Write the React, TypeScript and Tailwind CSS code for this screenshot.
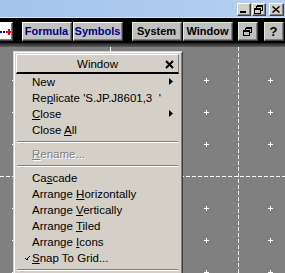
import React from 'react'

const ui = { fontFamily: '"Liberation Sans", Arial, sans-serif' }

function ToolButton({
  children,
  w,
  green,
  navy,
  className = '',
}: {
  children: React.ReactNode
  w: string
  green?: boolean
  navy?: boolean
  className?: string
}) {
  return (
    <div
      className={`h-[19px] ${w} ${className} flex border-l border-t ${
        green ? 'border-[#d8f0d8]' : 'border-white'
      } border-r border-b border-r-[#404040] border-b-[#404040]`}
    >
      <div
        className={`flex-1 flex items-center justify-center bg-[#c0c0c0] border-r border-b border-[#808080] text-[11px] font-bold leading-none pt-[1px] ${
          navy ? 'text-[#000080]' : 'text-black'
        }`}
      >
        {children}
      </div>
    </div>
  )
}

function CtrlButton({ children, className = '' }: { children: React.ReactNode; className?: string }) {
  return (
    <div className={`w-[14px] h-[13px] flex border-l border-t border-white border-r border-b border-r-[#404040] border-b-[#404040] ${className}`}>
      <div className="flex-1 flex items-center justify-center bg-[#d4d0c8] border-r border-b border-[#808080]">
        {children}
      </div>
    </div>
  )
}

function RestoreIcon() {
  return (
    <svg width="9" height="9" viewBox="0 0 9 9" shapeRendering="crispEdges">
      <path d="M2.5 0.5h6v5h-2M2.5 0.5v2M2 1.5h7" stroke="#000" fill="none" />
      <path d="M0.5 3.5h6v5h-6z M0 4.5h7" stroke="#000" fill="none" />
    </svg>
  )
}

function Arrow() {
  return (
    <svg width="4" height="7" viewBox="0 0 4 7" className="absolute right-[6px] top-[4px]">
      <path d="M0 0L4 3.5L0 7z" fill="#000" />
    </svg>
  )
}

function Item({
  children,
  arrow,
  check,
  disabled,
}: {
  children: React.ReactNode
  arrow?: boolean
  check?: boolean
  disabled?: boolean
}) {
  return (
    <div
      className={`relative h-[16px] pl-[16px] pt-[2px] flex items-center text-[11.5px] leading-none ${
        disabled ? 'text-[#808080] [text-shadow:1px_1px_0_#ffffff]' : 'text-black'
      }`}
    >
      {check && (
        <svg width="5" height="5" viewBox="0 0 5 5" className="absolute left-[9px] top-[6px]" shapeRendering="crispEdges">
          <rect x="0" y="2" width="1" height="1" fill="#000" />
          <rect x="1" y="3" width="1" height="1" fill="#000" />
          <rect x="2" y="2" width="1" height="2" fill="#000" />
          <rect x="3" y="1" width="1" height="1" fill="#000" />
          <rect x="4" y="0" width="1" height="1" fill="#000" />
        </svg>
      )}
      <span>{children}</span>
      {arrow && <Arrow />}
    </div>
  )
}

function Sep() {
  return (
    <div className="h-[8px] flex items-center pl-[1px] pr-[1px]">
      <div className="w-full border-t border-[#808080] border-b border-b-white" />
    </div>
  )
}

function Grid() {
  const xs = [14, 46, 78, 142, 174, 206, 270]
  const ys = [33, 65, 97, 161, 193, 225]
  let d = ''
  for (const x of xs) for (const y of ys) d += `M${x - 2} ${y + 0.5}h5M${x + 0.5} ${y - 2}v5`
  return (
    <svg width="285" height="226" viewBox="0 0 285 226" shapeRendering="crispEdges" className="block">
      <rect width="285" height="226" fill="#808080" />
      <path d={d} stroke="#fff" strokeWidth="1" />
      <path d="M238.5 0V226M110.5 0V226" stroke="#fff" strokeDasharray="4 2" />
      <path d="M0 129.5H285" stroke="#fff" strokeDasharray="4 2" />
    </svg>
  )
}

export default function App() {
  return (
    <div className="relative w-[285px] h-[273px] overflow-hidden bg-[#808080]" style={ui}>
      {/* barra titolo */}
      <div className="h-[17px] bg-gradient-to-r from-[#a4c4ec] to-[#b4d0f0] flex justify-end items-start pt-[3px] pr-[1px]">
        <CtrlButton>
          <div className="w-[6px] h-[2px] bg-black mt-[5px] -ml-[1px]" />
        </CtrlButton>
        <CtrlButton className="ml-[1px]">
          <RestoreIcon />
        </CtrlButton>
        <CtrlButton className="ml-[3px] w-[15px]">
          <svg width="8" height="7" viewBox="0 0 8 7">
            <path d="M0.5 0.5L7.5 6.5M7.5 0.5L0.5 6.5" stroke="#000" strokeWidth="1.5" />
          </svg>
        </CtrlButton>
      </div>
      <div className="h-[1px] bg-[#dce6f2]" />

      {/* toolbar */}
      <div className="h-[25px] bg-black flex items-start pt-[4px]">
        <div className="h-[19px] w-[13px] flex border-t border-white border-r border-b border-r-[#404040] border-b-[#404040]">
          <div className="flex-1 bg-white border-r border-b border-[#808080] flex items-center">
            <svg width="11" height="7" viewBox="0 0 11 7" shapeRendering="crispEdges">
              <rect x="0" y="3" width="2" height="2" fill="#0000ff" />
              <rect x="3" y="3" width="2" height="2" fill="#0000ff" />
              <rect x="6" y="3" width="5" height="2" fill="#ff0000" />
              <rect x="7.5" y="1" width="2" height="6" fill="#ff0000" />
            </svg>
          </div>
        </div>
        <ToolButton w="w-[50px]" navy className="ml-[9px]">Formula</ToolButton>
        <ToolButton w="w-[50px]" navy className="ml-[1px]">Symbols</ToolButton>
        <ToolButton w="w-[50px]" green className="ml-[9px]">System</ToolButton>
        <ToolButton w="w-[50px]" green className="ml-[1px]">Window</ToolButton>
        <ToolButton w="w-[20px]" green className="ml-[5px]">
          <RestoreIcon />
        </ToolButton>
        <ToolButton w="w-[20px]" green className="ml-[6px]">
          <span className="text-[13px]">?</span>
        </ToolButton>
      </div>
      <div className="h-[4px] bg-gradient-to-b from-[#202020] to-[#606060]" />

      <Grid />

      {/* menu Window */}
      <div className="absolute left-[13px] top-[51px] w-[170px] h-[240px] border-l border-t border-[#d4d0c8] border-r border-b border-r-[#404040] border-b-[#404040]">
        <div className="h-full bg-[#d4d0c8] border-l border-t border-white border-r border-b border-r-[#808080] border-b-[#808080] pl-[1px] pt-[1px] pr-[2px]">
          <div className="relative h-[20px] pt-[2px] border-l border-t border-white border-r border-r-[#808080] border-b-2 border-b-black flex items-center justify-center text-[11.5px] leading-none">
            Window
            <svg width="9" height="9" viewBox="0 0 9 9" className="absolute right-[4px] top-[5px]">
              <path d="M1 1L8 8M8 1L1 8" stroke="#000" strokeWidth="2" />
            </svg>
          </div>
          <Item arrow>New</Item>
          <Item>
            Re<u>p</u>licate 'S.JP.J8601,3&nbsp;&nbsp;'
          </Item>
          <Item arrow>
            <u>C</u>lose
          </Item>
          <Item>
            Close <u>A</u>ll
          </Item>
          <Sep />
          <Item disabled>
            <u>R</u>ename...
          </Item>
          <Sep />
          <Item>
            Ca<u>s</u>cade
          </Item>
          <Item>
            Arrange <u>H</u>orizontally
          </Item>
          <Item>
            Arrange <u>V</u>ertically
          </Item>
          <Item>
            Arrange <u>T</u>iled
          </Item>
          <Item>
            Arrange <u>I</u>cons
          </Item>
          <Item check>
            <u>S</u>nap To Grid...
          </Item>
          <Sep />
        </div>
      </div>
    </div>
  )
}
